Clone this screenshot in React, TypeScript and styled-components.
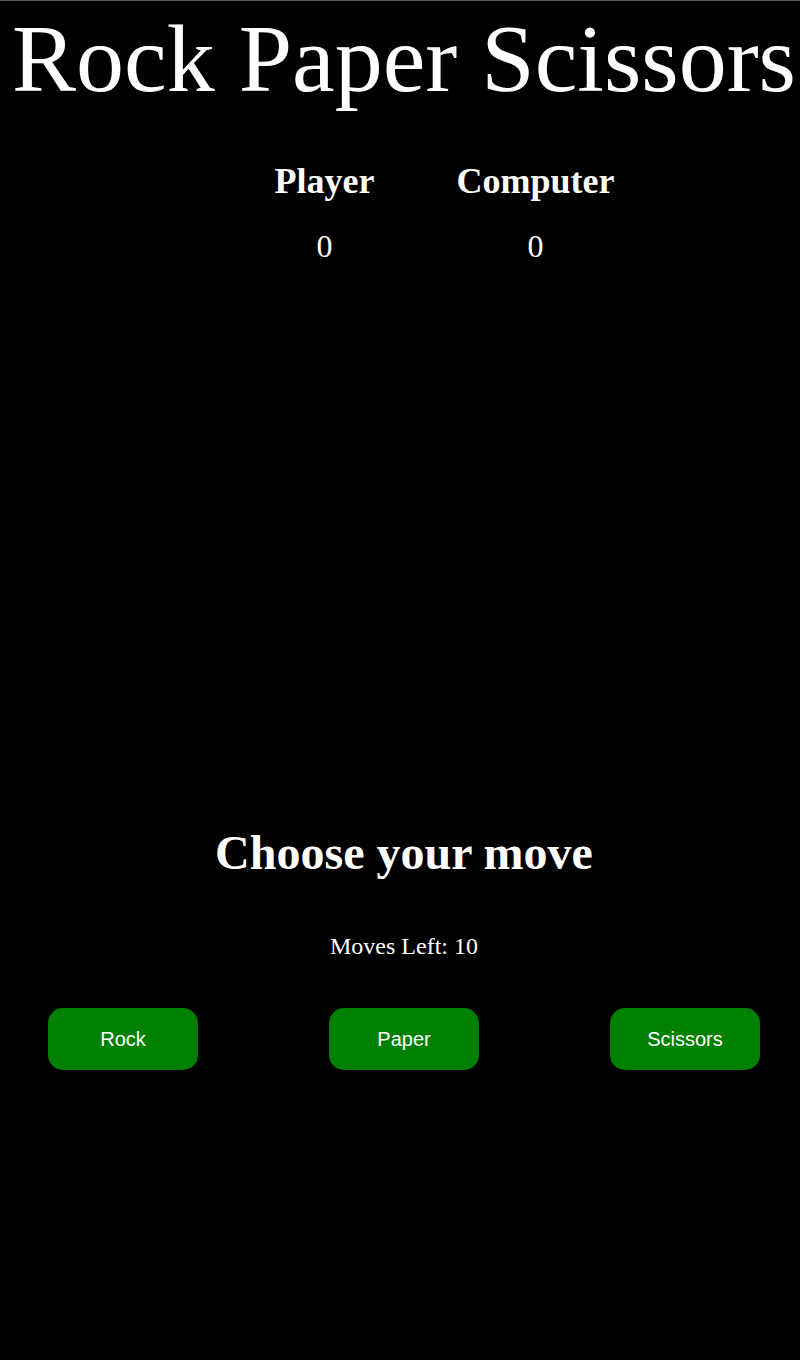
import React from "react";
import styled, { createGlobalStyle } from "styled-components";

const GlobalStyle = createGlobalStyle`
  html, body {
    background: #000000;
  }
  body {
    margin: 0;
    border-top: 1px solid #555555;
    font-family: "Liberation Serif", "Times New Roman", serif;
    color: #ffffff;
  }
`;

const Page = styled.div`
  margin-left: 8px;
  width: 792px;
  display: flex;
  flex-direction: column;
  align-items: stretch;
`;

const Title = styled.h1`
  margin: 2px 0 0 0;
  font-family: "Liberation Serif", "Times New Roman", serif;
  font-weight: normal;
  font-size: 96px;
  line-height: normal;
  text-align: center;
  white-space: nowrap;
`;

const ScoreBoard = styled.div`
  display: flex;
  justify-content: center;
  padding-left: 52px;
  margin-top: 46px;
`;

const ScoreColumn = styled.div`
  width: 211px;
  display: flex;
  flex-direction: column;
  align-items: center;
`;

const ScoreLabel = styled.h2`
  margin: 0;
  font-size: 36px;
  font-weight: bold;
  line-height: normal;
`;

const ScoreValue = styled.div`
  margin-top: 26px;
  font-size: 32px;
  line-height: normal;
`;

const Prompt = styled.h2`
  margin: 560px 0 0 0;
  font-size: 48px;
  font-weight: bold;
  line-height: normal;
  text-align: center;
`;

const MovesLeft = styled.p`
  margin: 53px 0 0 0;
  font-size: 24px;
  line-height: normal;
  text-align: center;
`;

const ButtonRow = styled.div`
  display: flex;
  justify-content: space-between;
  padding: 0 40px;
  margin-top: 48px;
`;

const MoveButton = styled.button`
  width: 150px;
  height: 62px;
  border: none;
  border-radius: 15px;
  background: #008000;
  color: #ffffff;
  font-family: "Liberation Sans", Arial, sans-serif;
  font-size: 20px;
  display: flex;
  align-items: center;
  justify-content: center;
  padding: 0;
  cursor: pointer;
`;

export default function App() {
  const scores = [
    { label: "Player", value: 0 },
    { label: "Computer", value: 0 },
  ];
  const moves = ["Rock", "Paper", "Scissors"];
  return (
    <>
      <GlobalStyle />
      <Page>
        <Title>Rock Paper Scissors</Title>
        <ScoreBoard>
          {scores.map((s) => (
            <ScoreColumn key={s.label}>
              <ScoreLabel>{s.label}</ScoreLabel>
              <ScoreValue>{s.value}</ScoreValue>
            </ScoreColumn>
          ))}
        </ScoreBoard>
        <Prompt>Choose your move</Prompt>
        <MovesLeft>Moves Left: 10</MovesLeft>
        <ButtonRow>
          {moves.map((m) => (
            <MoveButton key={m}>{m}</MoveButton>
          ))}
        </ButtonRow>
      </Page>
    </>
  );
}
